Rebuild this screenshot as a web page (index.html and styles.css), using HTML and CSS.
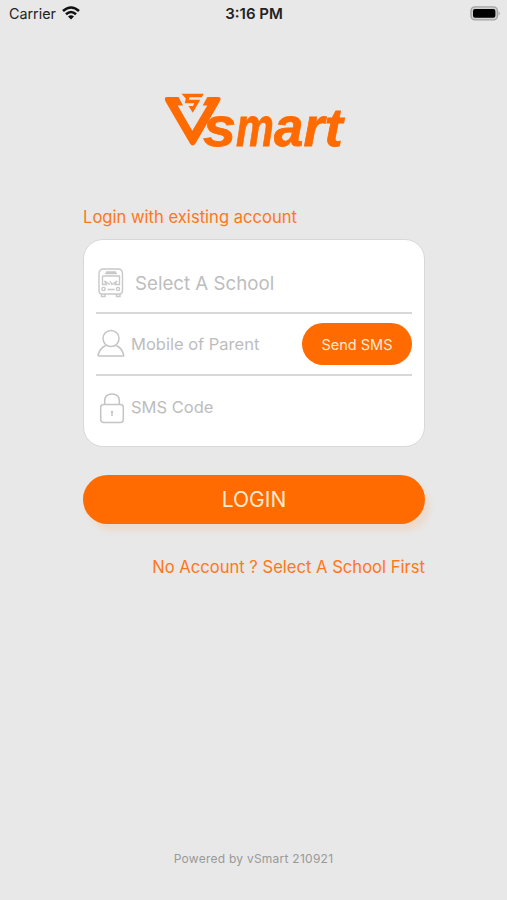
FILE: index.html
```html
<!DOCTYPE html>
<html lang="en">
<head>
<meta charset="utf-8">
<title>vSmart Login</title>
<link rel="stylesheet" href="styles.css">
</head>
<body>
<header class="status">
  <div class="carrier"><span>Carrier</span>
    <svg width="18" height="14" viewBox="0 0 18 14" fill="none" stroke="#111" stroke-width="2.6"><path d="M1 5Q9-2 17 5M4 8.3Q9 3.7 14 8.3"/><path d="M6 10.5Q9 8 12 10.5L9 13.6Z" fill="#111" stroke="none"/></svg>
  </div>
  <span class="time">3:16 PM</span>
  <svg class="battery" width="31" height="15" viewBox="0 0 31 15"><rect x="1" y=".9" width="26.4" height="13" rx="4" fill="#d0d0d0" stroke="#a3a3a3" stroke-width="1.4"/><rect x="3" y="3" width="22.4" height="8.800" rx="2" fill="#000"/><path d="M28.600 5.100Q30.800 7.400 28.600 9.700Z" fill="#999"/></svg>
</header>
<main class="content">
  <svg class="logo" width="182" height="58" viewBox="0 0 182 58" fill="#ff6b00">
    <path d="M3 4H14.500L19 12.500H13.700L28.300 37.700L43.300 12.500H38.700L43.300 4H54Q58 4 56 8L31.500 50.500Q28.500 54.500 26 50.500L1.500 8.500Q-.5 4 3 4Z"/>
    <path d="M17.500 .800H39.700L37.800 4.300H25.500L24.700 6.700H36.200L28.800 19.800L24.500 13H29L30.300 10.200H20.800L21.800 5.600Z"/>
    <g class="wordmark">
      <text transform="translate(39 53) scale(1.06 1)">s</text>
      <text transform="translate(72 53) scale(.76 1)">m</text>
      <text transform="translate(110 53) scale(.94 1)">a</text>
      <text transform="translate(139.500 53) scale(.95 1)">r</text>
      <text transform="translate(160.500 53) scale(.98 .97)">t</text>
    </g>
  </svg>
  <h1 class="heading"><span>Login with existing account</span></h1>
  <form class="card">
    <div class="row school">
      <svg width="30" height="32" viewBox="0 0 30 32" fill="none" stroke="#c8c8c8" stroke-width="1.400"><path d="M8 2H22Q26.500 2 26.500 7V24Q26.500 27 23.500 27H6Q3 27 3 24V7Q3 2 8 2ZM5.500 27V29.500H9V27M20.500 27V29.500H24V27M9 6.500H21M10 5H20M6.500 9H23.500V17.500H19L21 14L16 17.500L14 14M14 17.500L8.500 14L10.500 17.500H6.500V9M11.500 22.500H18.500"/><circle cx="7.500" cy="22" r="1.600"/><circle cx="22" cy="22" r="1.600"/></svg>
      <span>Select A School</span>
    </div>
    <div class="row mobile">
      <svg width="30" height="32" viewBox="0 0 30 32" fill="none" stroke="#c4c4c4" stroke-width="1.500"><circle cx="15" cy="10.500" r="8"/><path d="M9.800 17.500Q4 20 2 27Q1.900 28 3 28H27Q28 28 27.700 27Q26 20 20.200 17.500" stroke-linejoin="round"/></svg>
      <span>Mobile of Parent</span>
      <button type="button" class="send"><span>Send SMS</span></button>
    </div>
    <div class="row code">
      <svg width="30" height="32" viewBox="0 0 30 32" fill="none" stroke="#c4c4c4" stroke-width="1.500"><rect x="4.700" y="12.500" width="22.600" height="18" rx="3"/><path d="M8.700 12.500V9Q8.700 2 16 2T23.300 9V12.500M16 19V24M14.800 19.700H17.200"/></svg>
      <span>SMS Code</span>
    </div>
  </form>
  <button class="login"><span>LOGIN</span></button>
  <a class="register"><span>No Account ? Select A School First</span></a>
</main>
<footer><span>Powered by vSmart 210921</span></footer>
</body>
</html>
```
FILE: styles.css
```css
* { box-sizing: border-box; }
body { margin: 0; width: 507px; height: 900px; display: flex; flex-direction: column; background: #e8e8e8; font-family: Inter, "Liberation Sans", sans-serif; color: #ff7718; overflow: hidden; }
svg { display: block; flex: none; }
span { white-space: nowrap; }
button { border: 0; padding: 0; font-family: inherit; background: #ff6b00; color: #ffead0; }
.status { height: 28px; padding: 0 6px 0 9px; display: grid; grid-template-columns: 1fr auto 1fr; align-items: center; color: #222; }
.carrier { display: flex; align-items: center; gap: 6px; font-size: 14.3px; }
.carrier span { position: relative; top: -1px; }
.carrier svg { margin-top: -2px; }
.time { font-size: 15px; font-weight: 600; margin: -2px 2px 0 0; }
.battery { justify-self: end; margin-top: -2px; }
.content { width: 343px; margin-left: 83px; display: flex; flex-direction: column; }
.logo { margin: 65px 0 0 81px; overflow: visible; }
.wordmark { font: italic bold 56px "Liberation Sans", sans-serif; stroke: #ff6b00; stroke-width: .8; }
.heading { margin: 54px 0 0; height: 24px; line-height: 24px; font-size: 16.6px; font-weight: 400; }
.card { width: 342px; margin: 10px 0 0; height: 208px; padding: 0 12px; border: 1.500px solid #d8d8d8; border-radius: 20px; background: #fff; color: #bdbdbd; }
.row { display: flex; align-items: center; }
.school { height: 74px; padding-top: 13px; gap: 9px; font-size: 18.7px; border-bottom: 2px solid #d8d8d8; }
.school > span { margin-top: 1px; }
.mobile { height: 62px; gap: 5px; font-size: 16.5px; border-bottom: 2px solid #d8d8d8; }
.code { height: 63px; gap: 5px; font-size: 16.5px; }
.code > span { margin-top: -1px; }
.send { width: 110px; height: 42px; margin-left: auto; border-radius: 21px; font-size: 14.5px; }
.login { width: 342px; height: 49px; margin-top: 28px; border-radius: 25px; font-size: 21px; box-shadow: 5px 7px 5px rgba(255, 160, 90, .17); }
.register { margin-top: 31px; height: 24px; line-height: 24px; width: 342px; text-align: right; font-size: 16.6px; }
footer { margin-top: auto; height: 51px; line-height: 20px; text-align: center; font-size: 12px; letter-spacing: .25px; color: #999; }
```
